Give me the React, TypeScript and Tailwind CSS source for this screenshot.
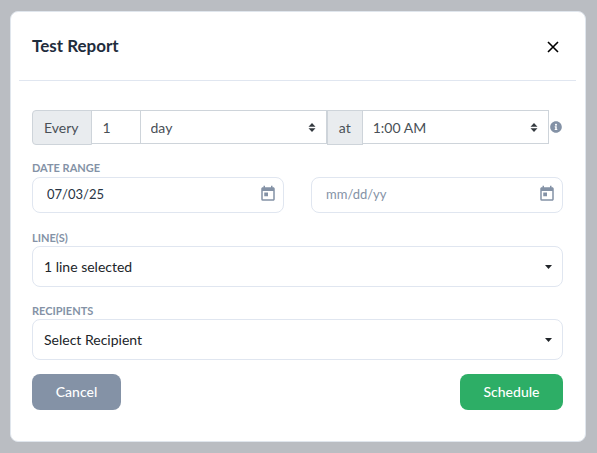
import { useState } from "react";
import type { ReactNode } from "react";
import { FaInfoCircle } from "react-icons/fa";
import { MdToday } from "react-icons/md";

function SortArrows() {
  return (
    <svg
      className="pointer-events-none absolute right-[11px] top-1/2 -mt-1 h-[9px] w-2"
      viewBox="0 0 8 9"
      fill="#343a40"
      aria-hidden="true"
    >
      <path d="M4 0L7.5 3.8H.5zM4 9L7.5 5.2H.5z" />
    </svg>
  );
}

function Caret() {
  return (
    <svg
      className="pointer-events-none absolute right-[11px] top-1/2 -mt-0.5 h-1 w-[7px]"
      viewBox="0 0 7 4"
      fill="#212529"
      aria-hidden="true"
    >
      <path d="M0 0H7L3.5 4z" />
    </svg>
  );
}

function FieldLabel({ htmlFor, children }: { htmlFor: string; children: ReactNode }) {
  return (
    <label htmlFor={htmlFor} className="block text-[11px] leading-4 font-bold text-[#8492a6] uppercase">
      {children}
    </label>
  );
}

function GroupSelect({ label, options }: { label: string; options: string[] }) {
  return (
    <div className="relative min-w-0 flex-1">
      <select
        aria-label={label}
        className="h-[34px] w-full appearance-none border border-[#ced4da] bg-white px-2.5 pt-0.5 text-sm text-[#495057]"
      >
        {options.map((option) => (
          <option key={option}>{option}</option>
        ))}
      </select>
      <SortArrows />
    </div>
  );
}

function DateField({ id, label, initial }: { id: string; label: string; initial: string }) {
  const [value, setValue] = useState(initial);
  return (
    <div className="flex h-9 min-w-0 items-center rounded-lg border border-[#e0e6f0] bg-white pr-1.5 pl-3.5">
      <input
        id={id}
        type="text"
        aria-label={label}
        placeholder="mm/dd/yy"
        value={value}
        onChange={(event) => setValue(event.target.value)}
        className="min-w-0 flex-1 bg-transparent text-[13px] text-[#273444] outline-none placeholder:text-[#8492a6]"
      />
      <button type="button" aria-label={"Open calendar: " + label} className="mb-0.5 text-[#8492a6]">
        <MdToday size={18} />
      </button>
    </div>
  );
}

function SelectField({ id, label, options }: { id: string; label: string; options: string[] }) {
  return (
    <div>
      <FieldLabel htmlFor={id}>{label}</FieldLabel>
      <div className="relative">
        <select
          id={id}
          className="block h-[41px] w-full appearance-none rounded-lg border border-[#e0e6f0] bg-white px-[11px] text-sm text-[#212529]"
        >
          {options.map((option) => (
            <option key={option}>{option}</option>
          ))}
        </select>
        <Caret />
      </div>
    </div>
  );
}

export default function App() {
  return (
    <main className="min-h-screen bg-[#babdc2] p-[11px] pl-2.5 font-['Lato',sans-serif]">
      <section
        role="dialog"
        aria-labelledby="dialog-title"
        className="rounded-lg border border-[#e0e6ed] bg-white pr-[9px] pl-2"
      >
        <header className="flex h-[69px] items-center justify-between border-b border-[#e0e6f0] px-[13px]">
          <h1 id="dialog-title" className="text-[17px] leading-6 font-bold text-[#1f2d3d]">
            Test Report
          </h1>
          <button type="button" aria-label="Close" className="pt-1 pb-0.5 pl-1">
            <svg className="mr-1 h-3 w-3" viewBox="0 0 12 12" stroke="#000" strokeWidth="1.6" aria-hidden="true">
              <path d="M1 1L11 11M11 1L1 11" />
            </svg>
          </button>
        </header>

        <form className="px-[13px] pt-[29px] pb-[31px]" onSubmit={(event) => event.preventDefault()}>
          <div className="flex items-start text-sm text-[#495057]">
            <label
              htmlFor="interval"
              className="flex h-[35px] items-center rounded-l border border-[#ced4da] bg-[#e9ecef] pr-3 pl-[11px]"
            >
              Every
            </label>
            <input
              id="interval"
              type="text"
              inputMode="numeric"
              defaultValue="1"
              className="-ml-px h-[34px] w-[50px] border border-[#ced4da] bg-white px-[11px]"
            />
            <div className="-ml-px flex min-w-0 flex-1">
              <GroupSelect label="Interval unit" options={["day", "week", "month"]} />
            </div>
            <span className="flex h-[35px] items-center border border-[#ced4da] bg-[#e9ecef] px-[11px]">at</span>
            <div className="-ml-px flex min-w-0 flex-1">
              <GroupSelect label="Time of day" options={["1:00 AM", "2:00 AM", "3:00 AM"]} />
            </div>
            <span role="img" aria-label="Schedule information" className="flex h-[34px] items-center px-px text-[#8492a6]">
              <FaInfoCircle size={12} />
            </span>
          </div>

          <div className="mt-[15px] flex flex-col gap-4">
            <div>
              <FieldLabel htmlFor="start-date">Date range</FieldLabel>
              <div className="my-px grid grid-cols-2 gap-[27px]">
                <DateField id="start-date" label="Start date" initial="07/03/25" />
                <DateField id="end-date" label="End date" initial="" />
              </div>
            </div>
            <SelectField id="lines" label="Line(s)" options={["1 line selected"]} />
            <SelectField id="recipients" label="Recipients" options={["Select Recipient"]} />
          </div>

          <div className="mt-3.5 flex justify-between text-sm font-medium text-white">
            <button type="button" className="h-9 min-w-[89px] rounded-lg bg-[#8492a6] px-[22px]">
              Cancel
            </button>
            <button type="submit" className="h-9 min-w-[103px] rounded-lg bg-[#2dae66] px-[22px]">
              Schedule
            </button>
          </div>
        </form>
      </section>
    </main>
  );
}
